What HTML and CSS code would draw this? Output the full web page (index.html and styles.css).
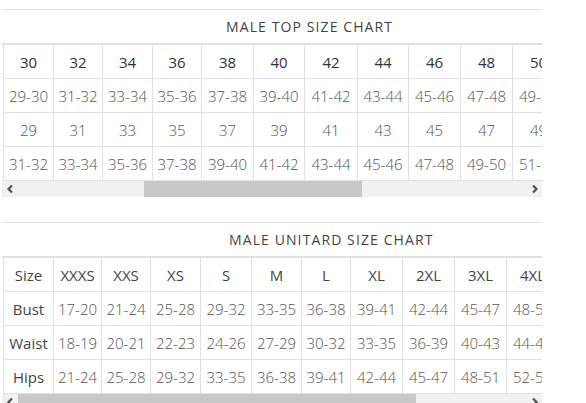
FILE: index.html
```html
<!DOCTYPE html>
<html>
<head>
<meta charset="utf-8">
<link rel="stylesheet" href="styles.css">
</head>
<body>
<div class="chart chart-top">
  <div class="chart-title title-top">MALE TOP SIZE CHART</div>
  <div class="chart-body">
    <table class="size-table top-table">
      <tr class="head">
        <td>30</td><td>32</td><td>34</td><td>36</td><td>38</td><td>40</td><td>42</td><td>44</td><td>46</td><td>48</td><td>50</td>
      </tr>
      <tr>
        <td>29-30</td><td>31-32</td><td>33-34</td><td>35-36</td><td>37-38</td><td>39-40</td><td>41-42</td><td>43-44</td><td>45-46</td><td>47-48</td><td>49-50</td>
      </tr>
      <tr>
        <td>29</td><td>31</td><td>33</td><td>35</td><td>37</td><td>39</td><td>41</td><td>43</td><td>45</td><td>47</td><td>49</td>
      </tr>
      <tr>
        <td>31-32</td><td>33-34</td><td>35-36</td><td>37-38</td><td>39-40</td><td>41-42</td><td>43-44</td><td>45-46</td><td>47-48</td><td>49-50</td><td>51-52</td>
      </tr>
    </table>
  </div>
  <div class="scrollbar">
    <span class="arrow"><svg width="8" height="10" viewBox="0 0 8 10"><polyline points="6,1.5 2.5,5 6,8.5" fill="none" stroke="#505050" stroke-width="2.2"/></svg></span>
    <div class="track"><div class="thumb thumb-top"></div></div>
    <span class="arrow"><svg width="8" height="10" viewBox="0 0 8 10"><polyline points="2,1.5 5.5,5 2,8.5" fill="none" stroke="#505050" stroke-width="2.2"/></svg></span>
  </div>
</div>

<div class="chart chart-bottom">
  <div class="chart-title title-bottom">MALE UNITARD SIZE CHART</div>
  <div class="chart-body">
    <table class="size-table unitard">
      <tr class="head">
        <td class="label">Size</td><td>XXXS</td><td>XXS</td><td>XS</td><td>S</td><td>M</td><td>L</td><td>XL</td><td>2XL</td><td>3XL</td><td>4XL</td>
      </tr>
      <tr>
        <td class="label">Bust</td><td>17-20</td><td>21-24</td><td>25-28</td><td>29-32</td><td>33-35</td><td>36-38</td><td>39-41</td><td>42-44</td><td>45-47</td><td>48-51</td>
      </tr>
      <tr>
        <td class="label">Waist</td><td>18-19</td><td>20-21</td><td>22-23</td><td>24-26</td><td>27-29</td><td>30-32</td><td>33-35</td><td>36-39</td><td>40-43</td><td>44-47</td>
      </tr>
      <tr>
        <td class="label">Hips</td><td>21-24</td><td>25-28</td><td>29-32</td><td>33-35</td><td>36-38</td><td>39-41</td><td>42-44</td><td>45-47</td><td>48-51</td><td>52-55</td>
      </tr>
    </table>
  </div>
  <div class="scrollbar">
    <span class="arrow"><svg width="8" height="10" viewBox="0 0 8 10"><polyline points="6,1.5 2.5,5 6,8.5" fill="none" stroke="#505050" stroke-width="2.2"/></svg></span>
    <div class="track"><div class="thumb thumb-bottom"></div></div>
    <span class="arrow"><svg width="8" height="10" viewBox="0 0 8 10"><polyline points="2,1.5 5.5,5 2,8.5" fill="none" stroke="#505050" stroke-width="2.2"/></svg></span>
  </div>
</div>
</body>
</html>
```

FILE: styles.css
```css
html, body {
  margin: 0;
  padding: 0;
  background: #fff;
  overflow: hidden;
}
body {
  padding-top: 9px;
  font-family: "Open Sans", "Noto Sans", sans-serif;
  color: #555;
}
.chart {
  width: 540px;
  margin-left: 2px;
}
.chart-bottom {
  margin-top: 25px;
}
.chart-title {
  height: 33px;
  line-height: 33px;
  border-top: 1px solid #e1e1e4;
  border-bottom: 2px solid #e1e1e4;
  font-size: 14px;
  letter-spacing: 1.1px;
  color: #444;
  white-space: nowrap;
}
.title-top { padding-left: 224px; }
.title-bottom { padding-left: 227px; }
.chart-body {
  overflow: hidden;
  padding-left: 1px;
}
.size-table {
  border-collapse: separate;
  border-spacing: 0;
  table-layout: fixed;
  width: max-content;
}
.size-table td {
  height: 33px;
  padding: 0;
  text-align: center;
  white-space: nowrap;
  overflow: hidden;
  font-size: 15px;
  font-weight: 300;
  color: #555;
  border-right: 1px solid #e1e1e4;
  border-bottom: 1px solid #e1e1e4;
  box-sizing: content-box;
}
.size-table td:first-child {
  border-left: 1px solid #e1e1e4;
}
.size-table .head td {
  font-weight: 500;
  color: #333;
}
.unitard .head td {
  font-weight: 400;
  color: #444;
}
.unitard td.label {
  font-weight: 500;
  color: #444;
}

/* column widths */
.top-table td:nth-child(1) { width: 49px; }
.top-table td:nth-child(2) { width: 48px; }
.top-table td:nth-child(3) { width: 49px; }
.top-table td:nth-child(4) { width: 48px; }
.top-table td:nth-child(5) { width: 51px; }
.top-table td:nth-child(6) { width: 50px; }
.top-table td:nth-child(7) { width: 52px; }
.top-table td:nth-child(8) { width: 50px; }
.top-table td:nth-child(9) { width: 51px; }
.top-table td:nth-child(10) { width: 51px; }
.top-table td:nth-child(11) { width: 51px; }

.unitard td:nth-child(1) { width: 49px; }
.unitard td:nth-child(2) { width: 47px; }
.unitard td:nth-child(3) { width: 48px; }
.unitard td:nth-child(4) { width: 49px; }
.unitard td:nth-child(5) { width: 50px; }
.unitard td:nth-child(6) { width: 49px; }
.unitard td:nth-child(7) { width: 48px; }
.unitard td:nth-child(8) { width: 51px; }
.unitard td:nth-child(9) { width: 51px; }
.unitard td:nth-child(10) { width: 51px; }
.unitard td:nth-child(11) { width: 51px; }

.scrollbar {
  display: flex;
  height: 16px;
  background: #f1f1f1;
}
.arrow {
  width: 15px;
  display: flex;
  align-items: center;
  justify-content: center;
}
.track {
  flex: 1;
  display: flex;
}
.thumb {
  background: #c8c8c8;
  height: 16px;
}
.thumb-top { margin-left: 127px; width: 218px; }
.thumb-bottom { margin-left: 1px; width: 398px; }
```
